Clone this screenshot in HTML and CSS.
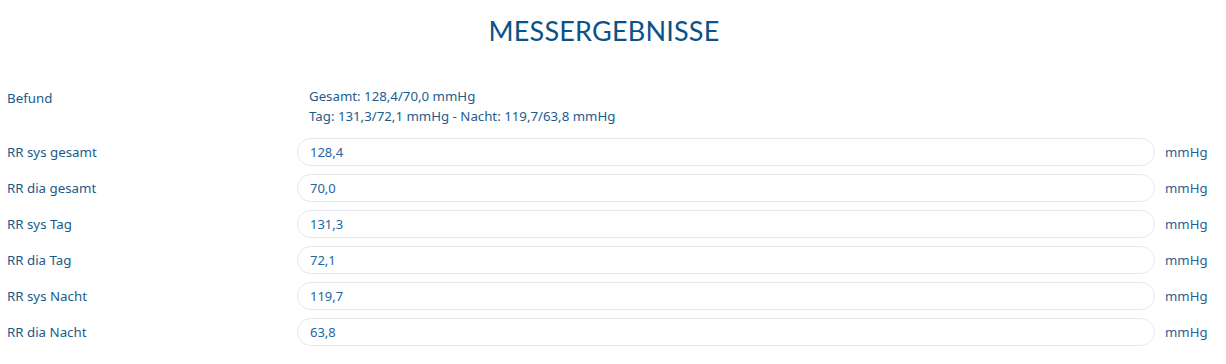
FILE: index.html
```html
<!DOCTYPE html>
<html lang="de">
<head>
<meta charset="utf-8">
<title>Messergebnisse</title>
<link rel="stylesheet" href="styles.css">
</head>
<body>
<div class="page">
  <h1 class="title">MESSERGEBNISSE</h1>
  <div class="rows">
    <div class="row row-befund">
      <div class="label">Befund</div>
      <div class="befund">
        <div>Gesamt: 128,4/70,0 mmHg</div>
        <div>Tag: 131,3/72,1 mmHg - Nacht: 119,7/63,8 mmHg</div>
      </div>
    </div>
    <div class="row">
      <div class="label">RR sys gesamt</div>
      <div class="field">128,4</div>
      <div class="unit">mmHg</div>
    </div>
    <div class="row">
      <div class="label">RR dia gesamt</div>
      <div class="field">70,0</div>
      <div class="unit">mmHg</div>
    </div>
    <div class="row">
      <div class="label">RR sys Tag</div>
      <div class="field">131,3</div>
      <div class="unit">mmHg</div>
    </div>
    <div class="row">
      <div class="label">RR dia Tag</div>
      <div class="field">72,1</div>
      <div class="unit">mmHg</div>
    </div>
    <div class="row">
      <div class="label">RR sys Nacht</div>
      <div class="field">119,7</div>
      <div class="unit">mmHg</div>
    </div>
    <div class="row">
      <div class="label">RR dia Nacht</div>
      <div class="field">63,8</div>
      <div class="unit">mmHg</div>
    </div>
  </div>
</div>
</body>
</html>
```
FILE: styles.css
```css
html, body {
  margin: 0;
  padding: 0;
  background: #ffffff;
}
body {
  font-family: "Noto Sans", "Open Sans", sans-serif;
  color: #1b5a88;
}
.page {
  padding: 0 0 0 7px;
}
.title {
  margin: 0;
  padding-top: 16px;
  padding-right: 25px;
  height: 34px;
  text-align: center;
  font-family: Lato, sans-serif;
  font-weight: 400;
  font-size: 27px;
  line-height: 30px;
  color: #0b5288;
  letter-spacing: 0.2px;
}
.rows {
  margin-top: 35px;
  display: flex;
  flex-direction: column;
  gap: 8px;
}
.row {
  display: grid;
  grid-template-columns: 290px 858px 1fr;
  align-items: center;
  font-size: 13.3px;
  height: 28px;
}
.row-befund {
  height: auto;
  align-items: start;
  margin-bottom: 4px;
}
.row-befund .label {
  padding-top: 4px;
}
.befund {
  grid-column: 2 / 4;
  padding-left: 12px;
  padding-top: 1px;
  line-height: 20px;
  font-size: 13.25px;
  color: #1d5d8c;
}
.label {
  color: #1b5a88;
}
.field {
  box-sizing: border-box;
  height: 28px;
  border: 1px solid #e3eaf1;
  border-radius: 14px;
  padding: 0 12px;
  display: flex;
  align-items: center;
  color: #2565a0;
  font-size: 13px;
}
.unit {
  padding-left: 10px;
  font-size: 13.2px;
  color: #2a5f93;
}
```
